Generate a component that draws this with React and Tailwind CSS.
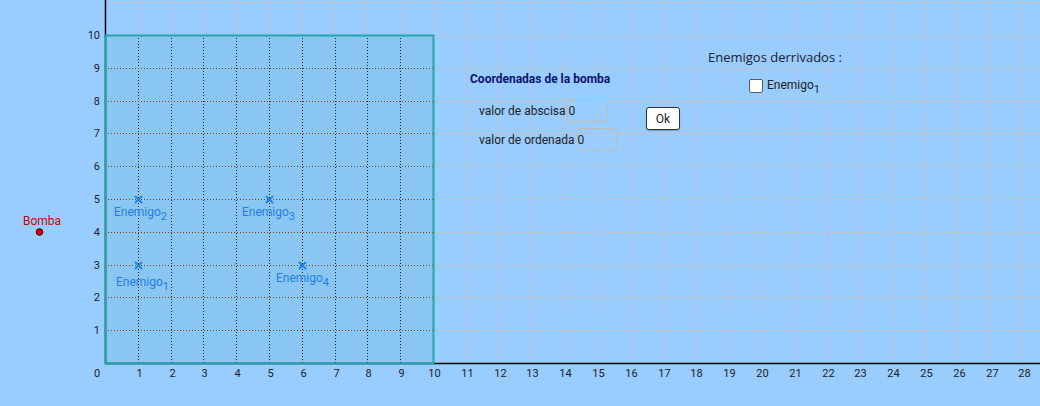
import React from "react";

const X = (x) => Math.round(105 + 32.8 * x);
const Y = (y) => Math.round(363 - 32.8 * y);
const range = (a, b) => Array.from({ length: b - a + 1 }, (_, i) => a + i);

const FONT = "Roboto, 'Liberation Sans', sans-serif";

function Label({ x, y, text, sub, color }) {
  return (
    <text x={x} y={y} fill={color} fontSize="12" fontFamily={FONT}>
      {text}
      <tspan fontSize="11" dy="4">{sub}</tspan>
    </text>
  );
}

function Cross({ x, y, color }) {
  const cx = X(x) + 0.5;
  const cy = Y(y) + 0.5;
  const s = 3;
  return (
    <g stroke={color} strokeWidth="1.8" strokeLinecap="round">
      <line x1={cx - s} y1={cy - s} x2={cx + s} y2={cy + s} />
      <line x1={cx - s} y1={cy + s} x2={cx + s} y2={cy - s} />
    </g>
  );
}

function Graph() {
  const blue = "#1f80e2";
  return (
    <svg className="absolute inset-0" width="1040" height="406" viewBox="0 0 1040 406">
      {/* background grid (first quadrant) */}
      <g stroke="#c9bcb0" strokeWidth="1" strokeDasharray="4,3">
        {range(1, 28).map((k) => (
          <line key={"v" + k} x1={X(k) + 0.5} y1={0} x2={X(k) + 0.5} y2={363} />
        ))}
        {range(1, 11).map((k) => (
          <line key={"h" + k} x1={105} y1={Y(k) + 0.5} x2={1040} y2={Y(k) + 0.5} />
        ))}
      </g>

      {/* square 0..10 */}
      <rect x={X(0)} y={Y(10)} width={X(10) - X(0)} height={Y(0) - Y(10)} fill="#8ac6f2" />
      <g stroke="#c9bcb0" strokeWidth="1" strokeDasharray="4,3" opacity="0.7">
        {range(1, 9).map((k) => (
          <line key={"sh" + k} x1={X(0)} y1={Y(k) + 0.5} x2={X(10)} y2={Y(k) + 0.5} />
        ))}
      </g>
      <g strokeWidth="1" strokeDasharray="1,2">
        {range(1, 9).map((k) => (
          <line key={"dv" + k} stroke="#1a1a1a" x1={X(k) + 0.5} y1={Y(10)} x2={X(k) + 0.5} y2={Y(0)} />
        ))}
        {range(1, 9).map((k) => (
          <line key={"dh" + k} stroke="#4a4a4a" x1={X(0)} y1={Y(k) + 0.5} x2={X(10)} y2={Y(k) + 0.5} />
        ))}
      </g>

      {/* axes */}
      <line x1={105.5} y1={0} x2={105.5} y2={363.5} stroke="#000" strokeWidth="1.5" />
      <line x1={105} y1={363.5} x2={1040} y2={363.5} stroke="#000" strokeWidth="1.5" />

      {/* square border */}
      <rect
        x={X(0) + 0.5}
        y={Y(10) + 0.5}
        width={X(10) - X(0)}
        height={Y(0) - Y(10)}
        fill="none"
        stroke="#26a3a8"
        strokeWidth="2"
      />

      {/* axis labels */}
      <g fill="#222" fontSize="11" fontFamily={FONT}>
        {range(1, 10).map((k) => (
          <text key={"yl" + k} x={100} y={Y(k) + 4} textAnchor="end">
            {k}
          </text>
        ))}
        <text x={97} y={377} textAnchor="middle">0</text>
        {range(1, 28).map((k) => (
          <text key={"xl" + k} x={X(k) + 1.5} y={377} textAnchor="middle">
            {k}
          </text>
        ))}
      </g>

      {/* Bomba */}
      <circle cx={39.5} cy={232} r={3.3} fill="#d10000" stroke="#330000" strokeWidth="1" />
      <text x={23} y={225} fill="#d10000" fontSize="12" fontFamily={FONT}>Bomba</text>

      {/* Enemigos */}
      <Cross x={1} y={5} color={blue} />
      <Cross x={5} y={5} color={blue} />
      <Cross x={1} y={3} color={blue} />
      <Cross x={6} y={3} color={blue} />
      <Label x={114} y={216} text="Enemigo" sub="2" color={blue} />
      <Label x={242} y={216} text="Enemigo" sub="3" color={blue} />
      <Label x={116} y={286} text="Enemigo" sub="1" color={blue} />
      <Label x={276} y={282} text="Enemigo" sub="4" color={blue} />
    </svg>
  );
}

function InputRow({ label }) {
  return (
    <div className="flex items-center h-[23px]">
      <span className="text-[12px] leading-[16px] text-[#222] pr-[1px]">{label}</span>
      <div className="w-[41px] h-[23px] border border-[#c3bcb4] rounded-[4px] flex items-center pl-[1px] text-[12px] text-[#222]">
        0
      </div>
    </div>
  );
}

export default function App() {
  return (
    <div
      className="relative w-[1040px] h-[406px] bg-[#99ccff] overflow-hidden"
      style={{ fontFamily: FONT }}
    >
      <Graph />

      {/* Coordenadas panel */}
      <div className="absolute left-[470px] top-[71px] flex flex-col">
        <div className="text-[12px] leading-[16px] font-bold text-[#0d1470]">
          Coordenadas de la bomba
        </div>
        <div className="mt-[12px] pl-[9px] flex flex-col gap-[6px]">
          <InputRow label="valor de abscisa" />
          <InputRow label="valor de ordenada" />
        </div>
      </div>

      <button className="absolute left-[646px] top-[107px] w-[34px] h-[23px] bg-white border border-[#333] rounded-[3px] text-[12px] leading-none text-[#222] flex items-center justify-center shadow-[0_1px_1px_rgba(0,0,0,0.25)]">
        Ok
      </button>

      {/* Enemigos derrivados panel */}
      <div className="absolute left-[708px] top-[48px] flex flex-col">
        <div className="text-[13px] leading-[18px] text-[#1a2030] font-['Open_Sans',sans-serif]">
          Enemigos derrivados :
        </div>
        <div className="mt-[11px] pl-[41px] flex items-center gap-[4px]">
          <div className="w-[14px] h-[14px] bg-white border-[1.5px] border-[#4d5d70] rounded-[2px]" />
          <span className="text-[12px] leading-[16px] text-[#222] whitespace-nowrap">
            Enemigo
            <span className="text-[11px] relative top-[4px]">1</span>
          </span>
        </div>
      </div>
    </div>
  );
}
